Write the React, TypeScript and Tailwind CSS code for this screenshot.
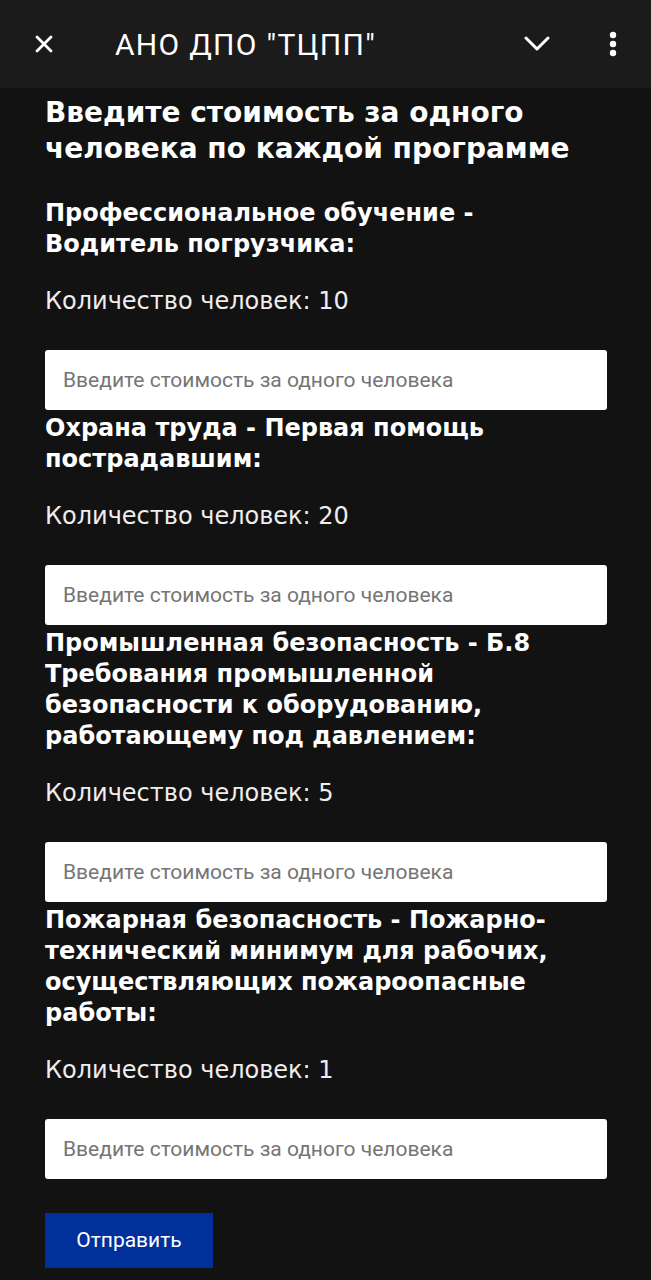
import React from 'react';
import { X } from 'lucide-react';

const programs = [
  { title: 'Профессиональное обучение - Водитель погрузчика:', count: 10 },
  { title: 'Охрана труда - Первая помощь пострадавшим:', count: 20 },
  {
    title: 'Промышленная безопасность - Б.8 Требования промышленной безопасности к оборудованию, работающему под давлением:',
    count: 5,
  },
  {
    title: 'Пожарная безопасность - Пожарно-технический минимум для рабочих, осуществляющих пожароопасные работы:',
    count: 1,
  },
];

export default function App() {
  return (
    <div className="min-h-[1280px] bg-[#121212] text-white">
      <div className="h-[88px] bg-[#1b1b1b] flex items-center px-[30px] font-['Roboto',sans-serif]">
        <X className="w-[28px] h-[28px]" strokeWidth={2.4} />
        <div className="ml-[57px] text-[30px] tracking-[1.3px]">АНО ДПО "ТЦПП"</div>
        <div className="ml-auto flex items-center">
          <svg width="26" height="16" viewBox="0 0 26 16" className="mr-[59px]">
            <path d="M2 2 L13 13 L24 2" fill="none" stroke="white" strokeWidth="3" strokeLinecap="round" strokeLinejoin="round" />
          </svg>
          <svg width="8" height="26" viewBox="0 0 8 26" className="mr-[4px]">
            <circle cx="4" cy="4" r="3.2" fill="white" />
            <circle cx="4" cy="13" r="3.2" fill="white" />
            <circle cx="4" cy="22" r="3.2" fill="white" />
          </svg>
        </div>
      </div>

      <div className="pl-[45px] pr-[44px] pt-[7px] pb-[12px] font-['DejaVu_Sans',sans-serif]">
        <h1 className="text-[28px] leading-[36px] font-bold">Введите стоимость за одного человека по каждой программе</h1>

        <div className="mt-[31px]">
          {programs.map((p, i) => (
            <div key={i} className="mt-[3px] first:mt-0">
              <h2 className="text-[24px] leading-[31px] font-bold">{p.title}</h2>
              <p className="mt-[26px] text-[24px] leading-[30px] font-normal text-[#eeeeee]">Количество человек: {p.count}</p>
              <input
                type="text"
                placeholder="Введите стоимость за одного человека"
                className="mt-[34px] w-full h-[60px] bg-white rounded-[3px] px-[18px] text-[21px] text-gray-900 placeholder:text-[#757575] font-['Roboto',sans-serif] outline-none"
              />
            </div>
          ))}
        </div>

        <button className="mt-[34px] w-[168px] h-[55px] bg-[#00309a] text-white text-[21px] font-['Roboto',sans-serif]">
          Отправить
        </button>
      </div>
    </div>
  );
}
